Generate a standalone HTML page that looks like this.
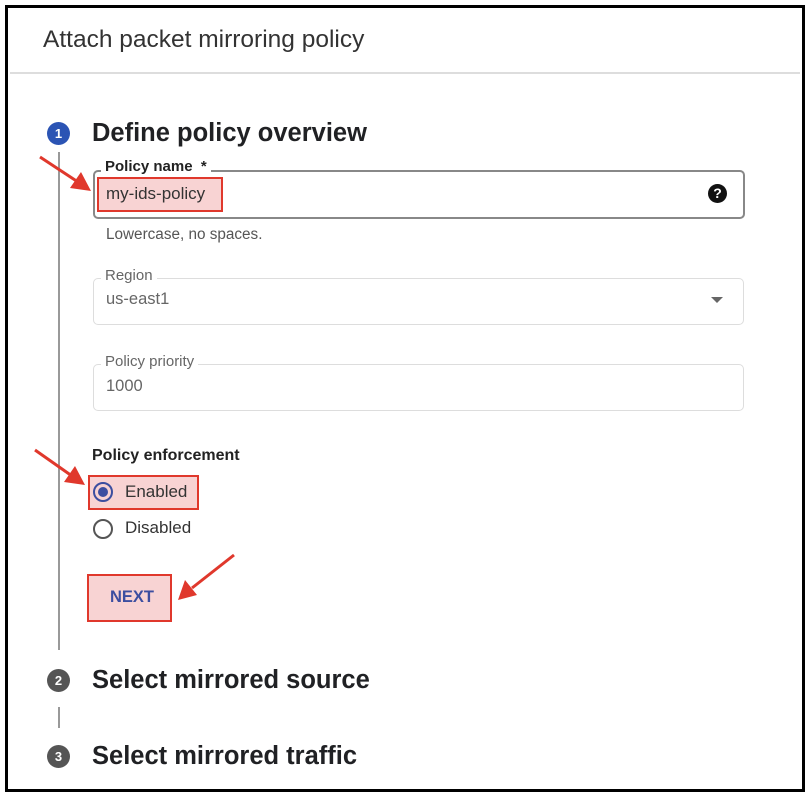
<!DOCTYPE html>
<html><head><meta charset="utf-8"><style>
body{margin:0;width:810px;height:798px;background:#fff;font-family:"Liberation Sans",Arial,sans-serif;position:relative;overflow:hidden}
.a{position:absolute;white-space:nowrap}
.frame{position:absolute;left:5px;top:5px;width:794px;height:781px;border:3px solid #000}
.fld{position:absolute;left:93px;width:649px;height:45px;border:1px solid #ddd;border-radius:5px}
.lbl{position:absolute;background:#fff;padding:0 4px;font-size:15px;color:#666;line-height:16px}
.num{position:absolute;width:23px;height:23px;border-radius:50%;color:#fff;font-size:13px;text-align:center;line-height:23px;font-weight:bold}
.h{position:absolute;left:92px;font-size:25.5px;font-weight:bold;color:#202124;line-height:30px}
.red{position:absolute;background:#f8d3d3;border:2px solid #e0382c;box-sizing:border-box}
</style></head><body>
<div class="frame"></div>
<div class="a" style="left:43px;top:26px;font-size:24.5px;color:#333">Attach packet mirroring policy</div>
<div class="a" style="left:10px;top:72px;width:790px;height:2px;background:#ddd"></div>

<div class="a" style="left:58px;top:152px;width:2px;height:498px;background:#999"></div>
<div class="num" style="left:47px;top:122px;background:#2b54b4">1</div>
<div class="h" style="top:118px">Define policy overview</div>

<div class="fld" style="top:170px;height:45px;border:2px solid #888;width:648px"></div>
<div class="lbl" style="left:101px;top:159px;color:#222;font-weight:bold">Policy name&nbsp; *</div>
<div class="red" style="left:97px;top:177px;width:126px;height:35px"></div>
<div class="a" style="left:106px;top:184px;font-size:17px;color:#333">my-ids-policy</div>
<div class="a" style="left:708px;top:184px;width:19px;height:19px;border-radius:50%;background:#111;color:#fff;font-size:14px;font-weight:bold;text-align:center;line-height:19px">?</div>
<div class="a" style="left:106px;top:226px;font-size:15.3px;color:#555">Lowercase, no spaces.</div>

<div class="fld" style="top:278px"></div>
<div class="lbl" style="left:101px;top:268px">Region</div>
<div class="a" style="left:106px;top:290px;font-size:16.5px;color:#666">us-east1</div>
<div class="a" style="left:711px;top:297px;width:0;height:0;border-left:6px solid transparent;border-right:6px solid transparent;border-top:6px solid #666"></div>

<div class="fld" style="top:364px"></div>
<div class="lbl" style="left:101px;top:354px">Policy priority</div>
<div class="a" style="left:106px;top:377px;font-size:16.5px;color:#666">1000</div>

<div class="a" style="left:92px;top:447px;font-size:16px;font-weight:bold;color:#222">Policy enforcement</div>
<div class="red" style="left:88px;top:475px;width:111px;height:35px"></div>
<div class="a" style="left:93px;top:482px;width:16px;height:16px;border:2px solid #3c4ea0;border-radius:50%"></div>
<div class="a" style="left:98px;top:487px;width:10px;height:10px;background:#3c4ea0;border-radius:50%"></div>
<div class="a" style="left:125px;top:482px;font-size:17px;color:#333">Enabled</div>
<div class="a" style="left:93px;top:519px;width:16px;height:16px;border:2px solid #555;border-radius:50%"></div>
<div class="a" style="left:125px;top:518px;font-size:17px;color:#333">Disabled</div>

<div class="red" style="left:87px;top:574px;width:85px;height:48px"></div>
<div class="a" style="left:110px;top:588px;font-size:16.5px;font-weight:bold;color:#3c4ea0">NEXT</div>

<div class="num" style="left:47px;top:669px;background:#555">2</div>
<div class="h" style="top:665px">Select mirrored source</div>
<div class="a" style="left:58px;top:707px;width:2px;height:21px;background:#999"></div>
<div class="num" style="left:47px;top:745px;background:#555">3</div>
<div class="h" style="top:741px">Select mirrored traffic</div>

<svg class="a" style="left:0;top:0" width="810" height="798">
<g stroke="#e0382c" stroke-width="3" fill="none">
<line x1="40" y1="157" x2="78" y2="182"/>
<line x1="35" y1="450" x2="72" y2="476"/>
<line x1="234" y1="555" x2="192" y2="588"/>
</g>
<g fill="#e0382c">
<path d="M91,191 L70,188 L81,172 Z"/>
<path d="M85,485 L64,482 L75,466 Z"/>
<path d="M178,600 L185,580 L197,595 Z"/>
</g></svg>
</body></html>
